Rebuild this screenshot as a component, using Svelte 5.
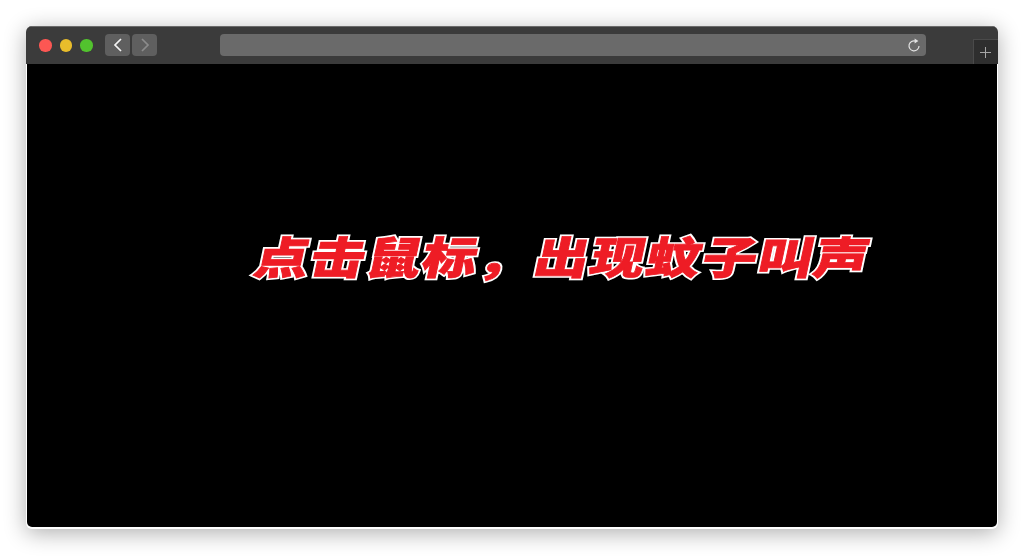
<script lang="ts">
  const lights = ["close", "minimize", "zoom"];
  const headline = "点击鼠标\uFF0C出现蚊子叫声";
</script>

<div class="page">
  <div class="window">
    <header class="titlebar">
      <div class="lights">
        {#each lights as light}
          <span class="light {light}"></span>
        {/each}
      </div>
      <div class="nav">
        <button class="nav-btn" aria-label="Back">
          <svg width="12" height="16" viewBox="0 0 12 16">
            <path d="M9 2 L3 8 L9 14" fill="none" stroke="#f4f4f4" stroke-width="1.7" />
          </svg>
        </button>
        <button class="nav-btn" aria-label="Forward">
          <svg width="12" height="16" viewBox="0 0 12 16">
            <path d="M3 2 L9 8 L3 14" fill="none" stroke="#8c8c8c" stroke-width="1.7" />
          </svg>
        </button>
      </div>
      <div class="address">
        <svg class="reload" width="14" height="15" viewBox="0 0 14 15">
          <path d="M8.6 3.1 A5 5 0 1 0 12 7.9" fill="none" stroke="#e2e2e2" stroke-width="1.2" />
          <path d="M7.6 0.4 L11.4 3 L7.6 5.6 Z" fill="#e2e2e2" />
        </svg>
      </div>
      <div class="new-tab">
        <svg width="13" height="13" viewBox="0 0 13 13">
          <path d="M6.5 1 V12 M1 6.5 H12" fill="none" stroke="#a6a6a6" stroke-width="1" />
        </svg>
      </div>
    </header>
    <main class="stage">
      <h1 class="headline" data-text={headline}>{headline}</h1>
    </main>
  </div>
</div>

<style>
  :global(body) {
    margin: 0;
    background: #fff;
  }

  .page {
    width: 1024px;
    height: 556px;
    padding: 26px 26px 27px;
    box-sizing: border-box;
    overflow: hidden;
  }

  .window {
    height: 100%;
    display: flex;
    flex-direction: column;
    border-radius: 6px;
    overflow: hidden;
    background: #fff;
    box-shadow: 0 4px 22px rgba(0, 0, 0, 0.32);
  }

  .titlebar {
    flex: 0 0 38px;
    box-sizing: border-box;
    display: flex;
    align-items: flex-start;
    padding: 7px 0 0 13px;
    background: #3b3b3b;
    border-top: 1px solid #6a6a6a;
  }

  .lights {
    display: flex;
    gap: 8px;
    margin-top: 5px;
  }

  .light {
    width: 12.5px;
    height: 12.5px;
    border-radius: 50%;
  }
  .close {
    background: #fc5753;
  }
  .minimize {
    background: #e9bd2b;
  }
  .zoom {
    background: #52c22e;
  }

  .nav {
    display: flex;
    gap: 2px;
    margin-left: 12.5px;
  }

  .nav-btn {
    width: 25px;
    height: 22px;
    padding: 0;
    border: none;
    border-radius: 4px;
    background: #5f5f5f;
    display: flex;
    align-items: center;
    justify-content: center;
  }

  .address {
    width: 706px;
    height: 22px;
    margin-left: 63px;
    padding-right: 5px;
    box-sizing: border-box;
    border-radius: 4px;
    background: #6a6a6a;
    display: flex;
    align-items: center;
    justify-content: flex-end;
  }

  .new-tab {
    width: 25px;
    height: 25px;
    margin: 5px 0 0 47px;
    padding-right: 2px;
    box-sizing: border-box;
    background: #2e2e2e;
    border-left: 1px solid #4a4a4a;
    border-top: 1px solid #4a4a4a;
    display: flex;
    align-items: center;
    justify-content: center;
  }

  .stage {
    flex: 1;
    margin: 0 1px 2px;
    border-radius: 0 0 5px 5px;
    background: #000;
    display: flex;
    align-items: center;
    padding: 0 0 82px 229px;
  }

  .headline {
    position: relative;
    margin: 0;
    white-space: nowrap;
    font-family: "Noto Sans CJK SC", sans-serif;
    font-weight: 900;
    font-size: 44px;
    line-height: 60px;
    letter-spacing: 1.5px;
    color: #ee1c25;
    -webkit-text-stroke: 4px #fff;
    transform-origin: left center;
    transform: skewX(-12deg) scaleX(1.23);
  }

  /* red copy on top so the white only shows as an outline */
  .headline::after {
    content: attr(data-text);
    position: absolute;
    left: 0;
    top: 0;
    -webkit-text-stroke: 0.8px #ee1c25;
  }
</style>
